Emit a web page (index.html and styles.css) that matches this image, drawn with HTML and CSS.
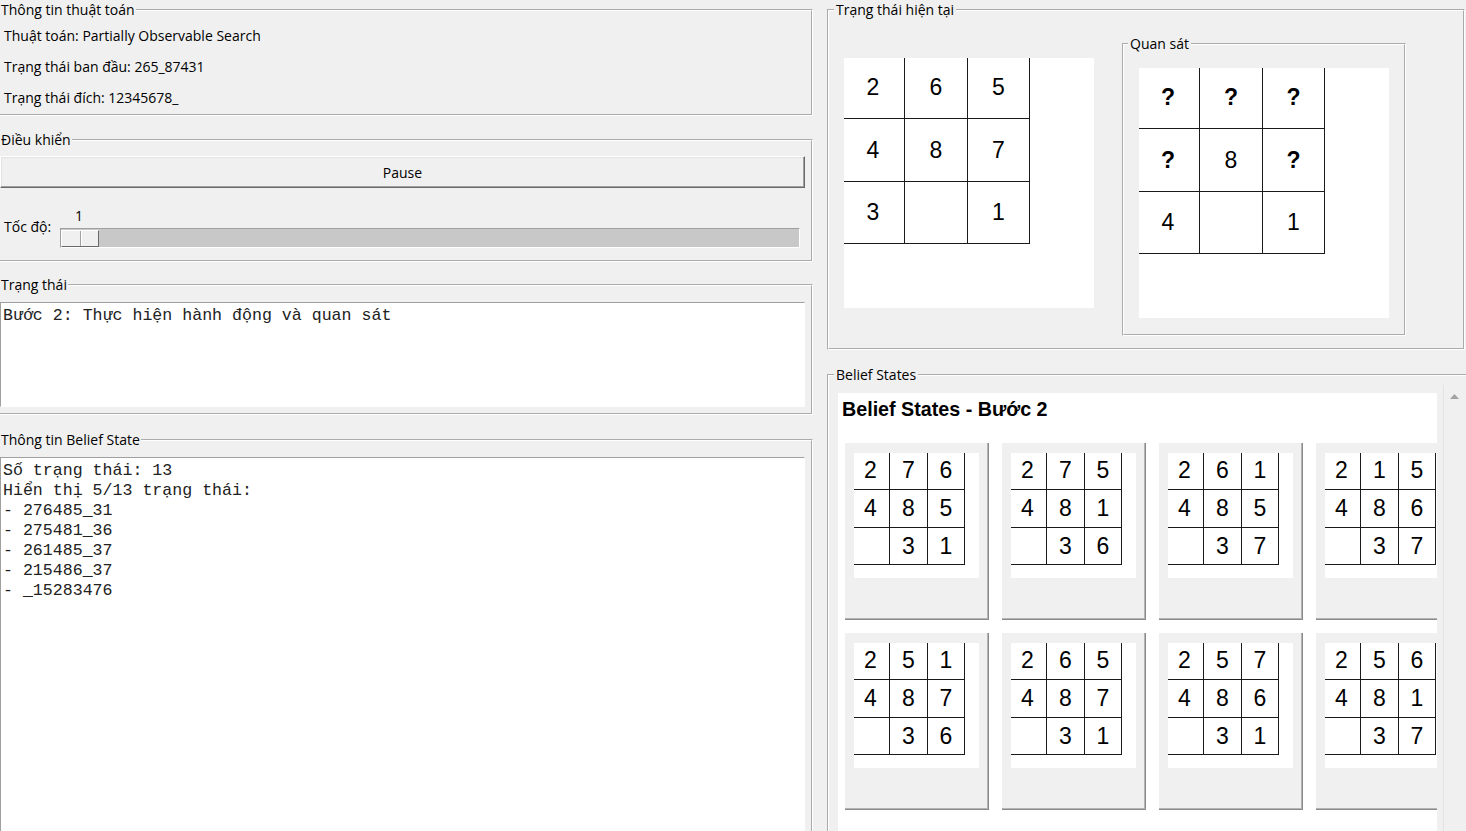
FILE: index.html
```html
<!DOCTYPE html>
<html lang="vi">
<head>
<meta charset="utf-8">
<title>Partially Observable Search</title>
<link rel="stylesheet" href="styles.css">
</head>
<body>
<div class="app">
  <div class="left">
    <fieldset class="lf f1">
      <legend>Thông tin thuật toán</legend>
      <div class="info">
        <div>Thuật toán: Partially Observable Search</div>
        <div>Trạng thái ban đầu: 265_87431</div>
        <div>Trạng thái đích: 12345678_</div>
      </div>
    </fieldset>
    <fieldset class="lf f2">
      <legend>Điều khiển</legend>
      <button class="btn">Pause</button>
      <div class="speed">
        <span class="speed-label">Tốc độ:</span>
        <div class="scale">
          <div class="scale-value">1</div>
          <div class="trough"><div class="thumb"></div></div>
        </div>
      </div>
    </fieldset>
    <fieldset class="lf f3">
      <legend>Trạng thái</legend>
      <div class="textbox tb-status">Bước 2: Thực hiện hành động và quan sát</div>
    </fieldset>
    <fieldset class="lf f4">
      <legend>Thông tin Belief State</legend>
      <div class="textbox tb-belief">Số trạng thái: 13
Hiển thị 5/13 trạng thái:
- 276485_31
- 275481_36
- 261485_37
- 215486_37
- _15283476</div>
    </fieldset>
  </div>

  <div class="right">
    <fieldset class="rf cur">
      <legend>Trạng thái hiện tại</legend>
      <div class="cur-body">
        <div class="canvas big main-canvas">
          <div class="board big-board">
            <div class="cell">2</div><div class="cell">6</div><div class="cell">5</div>
            <div class="cell">4</div><div class="cell">8</div><div class="cell">7</div>
            <div class="cell">3</div><div class="cell"></div><div class="cell">1</div>
          </div>
        </div>
        <fieldset class="rf obs">
          <legend>Quan sát</legend>
          <div class="canvas big obs-canvas">
            <div class="board big-board">
              <div class="cell q">?</div><div class="cell q">?</div><div class="cell q">?</div>
              <div class="cell q">?</div><div class="cell">8</div><div class="cell q">?</div>
              <div class="cell">4</div><div class="cell"></div><div class="cell">1</div>
            </div>
          </div>
        </fieldset>
      </div>
    </fieldset>

    <fieldset class="rf belief">
      <legend>Belief States</legend>
      <div class="belief-body">
        <div class="bcanvas">
          <div class="btitle">Belief States - Bước 2</div>
          <div class="cards">
            <div class="card"><div class="canvas small"><div class="board small-board">
              <div class="cell">2</div><div class="cell">7</div><div class="cell">6</div>
              <div class="cell">4</div><div class="cell">8</div><div class="cell">5</div>
              <div class="cell"></div><div class="cell">3</div><div class="cell">1</div>
            </div></div></div>
            <div class="card"><div class="canvas small"><div class="board small-board">
              <div class="cell">2</div><div class="cell">7</div><div class="cell">5</div>
              <div class="cell">4</div><div class="cell">8</div><div class="cell">1</div>
              <div class="cell"></div><div class="cell">3</div><div class="cell">6</div>
            </div></div></div>
            <div class="card"><div class="canvas small"><div class="board small-board">
              <div class="cell">2</div><div class="cell">6</div><div class="cell">1</div>
              <div class="cell">4</div><div class="cell">8</div><div class="cell">5</div>
              <div class="cell"></div><div class="cell">3</div><div class="cell">7</div>
            </div></div></div>
            <div class="card"><div class="canvas small"><div class="board small-board">
              <div class="cell">2</div><div class="cell">1</div><div class="cell">5</div>
              <div class="cell">4</div><div class="cell">8</div><div class="cell">6</div>
              <div class="cell"></div><div class="cell">3</div><div class="cell">7</div>
            </div></div></div>
            <div class="card"><div class="canvas small"><div class="board small-board">
              <div class="cell">2</div><div class="cell">5</div><div class="cell">1</div>
              <div class="cell">4</div><div class="cell">8</div><div class="cell">7</div>
              <div class="cell"></div><div class="cell">3</div><div class="cell">6</div>
            </div></div></div>
            <div class="card"><div class="canvas small"><div class="board small-board">
              <div class="cell">2</div><div class="cell">6</div><div class="cell">5</div>
              <div class="cell">4</div><div class="cell">8</div><div class="cell">7</div>
              <div class="cell"></div><div class="cell">3</div><div class="cell">1</div>
            </div></div></div>
            <div class="card"><div class="canvas small"><div class="board small-board">
              <div class="cell">2</div><div class="cell">5</div><div class="cell">7</div>
              <div class="cell">4</div><div class="cell">8</div><div class="cell">6</div>
              <div class="cell"></div><div class="cell">3</div><div class="cell">1</div>
            </div></div></div>
            <div class="card"><div class="canvas small"><div class="board small-board">
              <div class="cell">2</div><div class="cell">5</div><div class="cell">6</div>
              <div class="cell">4</div><div class="cell">8</div><div class="cell">1</div>
              <div class="cell"></div><div class="cell">3</div><div class="cell">7</div>
            </div></div></div>
          </div>
        </div>
        <div class="scrollbar">
          <svg class="arrow" width="9" height="5" viewBox="0 0 9 5"><polygon points="0,5 4.5,0 9,5" fill="#a3a3a3"/></svg>
        </div>
      </div>
    </fieldset>
  </div>
</div>
</body>
</html>
```

FILE: styles.css
```css
* { box-sizing: border-box; }
html, body { margin: 0; padding: 0; }
body {
  width: 1466px;
  height: 831px;
  overflow: hidden;
  background: #f0f0f0;
  font-family: "Open Sans", "Noto Sans", sans-serif;
  font-size: 14px;
  color: #000;
}
.app { display: flex; align-items: flex-start; gap: 14px; }

fieldset {
  margin: 0;
  padding: 0;
  min-width: 0;
  border: 2px groove #fff;
}
legend {
  padding: 0 1px;
  line-height: 16px;
  font-size: 14px;
}

/* left column */
.left { width: 813px; flex: none; display: flex; flex-direction: column; padding-top: 2px; }
.lf { border-left: none; width: 813px; }
.f1 { height: 114px; }
.f2 { height: 130px; margin-top: 16px; }
.f3 { height: 138px; margin-top: 15px; }
.f4 { height: 440px; margin-top: 17px; }

.info { padding: 2px 0 0 4px; line-height: 31px; }

.btn {
  display: block;
  width: 805px;
  height: 32px;
  margin: 8px 0 0 0;
  padding: 0;
  font-family: "Open Sans", "Noto Sans", sans-serif;
  font-size: 14px;
  color: #000;
  background: #f0f0f0;
  border: 1px solid;
  border-color: #fff #696969 #696969 #fff;
  box-shadow: inset -1px -1px 0 #a0a0a0, inset 1px 1px 0 #e3e3e3;
}

.speed { display: flex; align-items: flex-start; margin-top: 20px; }
.speed-label { width: 60px; padding-left: 4px; margin-top: 11px; line-height: 16px; }
.scale { display: flex; flex-direction: column; }
.scale-value { width: 38px; text-align: center; line-height: 16px; }
.trough {
  width: 740px;
  height: 20px;
  margin-top: 4px;
  padding: 1px 0 0 0;
  background: #c8c8c8;
  border: 1px solid;
  border-color: #a0a0a0 #fff #fff #a0a0a0;
}
.thumb {
  width: 38px;
  height: 17px;
  background: #f0f0f0 linear-gradient(to right, transparent 18px, #a0a0a0 18px, #a0a0a0 19px, #fff 19px, #fff 20px, transparent 20px);
  border: 1px solid;
  border-color: #fff #696969 #696969 #fff;
}

.textbox {
  width: 805px;
  margin-top: 9px;
  padding: 3px 0 0 2px;
  background: #fff;
  border: 1px solid;
  border-color: #a0a0a0 #fff #fff #a0a0a0;
  font-family: "Liberation Mono", "Courier New", monospace;
  font-size: 16.6px;
  line-height: 20px;
  color: #222;
  white-space: pre;
  overflow: hidden;
}
.tb-status { height: 105px; }
.tb-belief { height: 400px; }

/* right column */
.right { width: 639px; flex: none; display: flex; flex-direction: column; padding-top: 2px; }
.rf legend { margin-left: 5px; padding: 0 2px; }
.cur { width: 638px; height: 348px; }
.cur-body { display: flex; align-items: flex-start; gap: 28px; padding: 18px 0 0 15px; }
.main-canvas { margin-top: 22px; }
.obs { width: 284px; height: 300px; }
.obs legend { margin-left: 4px; }
.obs-canvas { margin: 16px 0 0 15px; }

.canvas { background: #fff; overflow: hidden; flex: none; }
.canvas.big { width: 250px; height: 250px; }
.canvas.small { width: 125px; height: 125px; }
.board { display: grid; margin: -2px 0 0 -2px; }
.big-board { grid-template-columns: 63px 63px 62px; grid-template-rows: 63px 63px 62px; }
.small-board { grid-template-columns: 38px 38px 37px; grid-template-rows: 39px 38px 37px; }
.cell {
  border-right: 1px solid #1a1a1a;
  border-bottom: 1px solid #1a1a1a;
  display: flex;
  align-items: center;
  justify-content: center;
  font-family: "Liberation Sans", Arial, sans-serif;
  font-size: 23px;
}
.cell.q { font-weight: bold; }

.belief { width: 660px; height: 480px; margin-top: 17px; }
.belief-body { display: flex; align-items: flex-start; gap: 6px; padding: 2px 0 0 9px; }
.bcanvas { width: 599px; height: 450px; margin-top: 8px; background: #fff; overflow: hidden; flex: none; }
.btitle {
  font-family: "Liberation Sans", Arial, sans-serif;
  font-weight: bold;
  font-size: 19.7px;
  line-height: 24px;
  padding: 4px 0 0 4px;
}
.cards {
  display: grid;
  grid-template-columns: repeat(4, 144px);
  grid-auto-rows: 177px;
  gap: 13px;
  margin-top: 22px;
  padding-left: 7px;
}
.card {
  width: 144px;
  height: 177px;
  background: #f0f0f0;
  padding: 10px 0 0 9px;
  border-right: 1px solid #8a8a8a;
  border-bottom: 1px solid #8a8a8a;
  box-shadow: inset -1px -1px 0 #b4b4b4;
}
.scrollbar {
  width: 30px;
  height: 460px;
  background: #f0f0f0;
  border-left: 1px solid #e3e3e3;
  flex: none;
}
.arrow { display: block; margin: 9px 0 0 6px; }
```
